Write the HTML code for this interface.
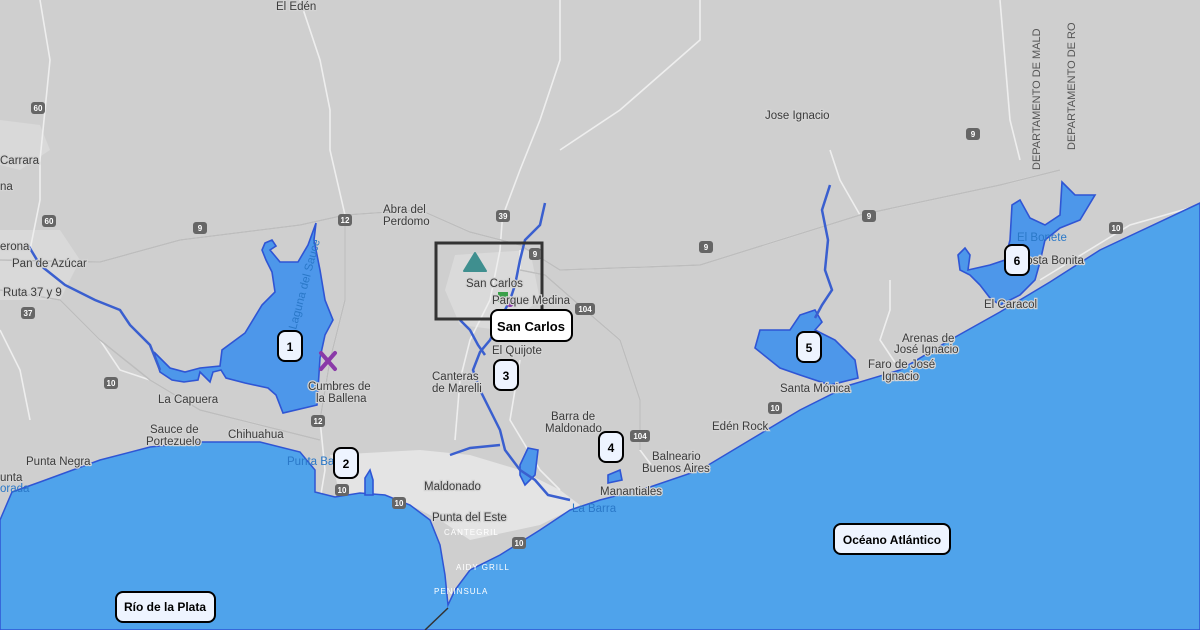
<!DOCTYPE html>
<html><head><meta charset="utf-8"><style>
html,body{margin:0;padding:0;width:1200px;height:630px;overflow:hidden;background:#cfcfcf}
svg{display:block}
text{font-family:"Liberation Sans",sans-serif}
.l{font-size:11.5px;fill:#3c3c3c;stroke:#d4d4d4;stroke-width:2.5px;paint-order:stroke}
.w{font-size:11.5px;fill:#2a78c8}
.s{font-size:8px;fill:#fff;font-weight:bold;text-anchor:middle}
.m{font-size:13px;font-weight:bold;fill:#000;text-anchor:middle}
.b{font-size:12px;font-weight:bold;fill:#000;text-anchor:middle}
</style></head><body>
<svg width="1200" height="630" viewBox="0 0 1200 630" xmlns="http://www.w3.org/2000/svg">
<rect width="1200" height="630" fill="#cfcfcf"/>
<path d="M330 455 L420 450 L470 455 L520 470 L560 490 L580 505 L540 525 L470 540 L440 520 L400 500 L340 495 Z" fill="#e4e4e4"/>
<path d="M455 255 L530 250 L540 300 L500 330 L460 325 L445 290 Z" fill="#dadada"/>
<path d="M0 120 L40 125 L50 150 L20 170 L0 165 Z" fill="#d9d9d9"/>
<path d="M0 230 L60 230 L80 260 L60 300 L0 300 Z" fill="#d9d9d9"/>
<g fill="none" stroke="#eeeeee" stroke-width="1.6">
<path d="M0 260 L100 262 L180 240 L300 225 L345 215 L420 210 L470 232 L520 245 L560 270 L700 265 L860 215 L1000 185 L1060 170"/>
<path d="M345 215 L345 300 L330 360 L320 420 L325 470 L320 500"/>
<path d="M503 210 L500 250 L490 300 L470 340 L460 380 L455 440"/>
<path d="M520 250 L520 270 L545 275 L585 310 L620 340 L640 400 L640 450 L655 470"/>
<path d="M0 290 L60 300 L100 340 L120 370 L150 380 L200 410 L240 420 L280 430 L320 440"/>
<path d="M40 0 L50 60 L45 110 L40 160 L40 200 L30 250"/>
<path d="M300 0 L320 60 L330 110 L330 150 L345 215"/>
<path d="M560 0 L560 60 L540 120 L520 170 L505 210"/>
<path d="M860 215 L840 180 L830 150"/>
<path d="M890 280 L890 310 L880 340 L900 370"/>
<path d="M1200 205 L1130 225 L1040 280"/>
<path d="M700 0 L700 40 L620 110 L560 150"/>
<path d="M1000 0 L1010 120 L1020 160"/>
<path d="M0 330 L20 370 L30 420"/>
<path d="M520 360 L510 420 L540 470 L560 490"/>
</g>
<g fill="none" stroke="#bdbdbd" stroke-width="1.5">
<path d="M0 260 L100 262 L180 240 L300 225 L345 215 L420 210 L470 232 L520 245 L560 270 L700 265 L860 215 L1000 185 L1060 170"/>
<path d="M345 215 L345 300 L330 360 L320 420"/>
<path d="M520 270 L545 275 L585 310 L620 340 L640 400 L640 450"/>
<path d="M0 290 L60 300 L100 340 L150 380 L200 410 L280 430 L320 440"/>
</g>
<path d="M0 630 L0 520 L12 492 L40 482 L100 460 L150 447 L200 442 L260 442 L300 452 L315 470 L315 492 L335 497 L360 493 L385 495 L410 505 L430 520 L440 545 L445 575 L448 605 L455 590 L470 570 L500 555 L540 530 L570 510 L600 500 L650 487 L700 470 L750 440 L800 410 L850 385 L900 370 L950 340 L1000 312 L1050 282 L1100 250 L1200 203 L1200 630 Z" fill="#4fa3eb" stroke="#2f55d4" stroke-width="1.5"/>
<g fill="#4d97ea" stroke="#2f55d4" stroke-width="1.6">
<path d="M265 243 L272 240 L276 246 L270 250 L280 262 L298 262 L308 245 L316 223 L314 240 L320 270 L325 300 L333 320 L325 335 L320 358 L317 405 L283 413 L276 395 L268 388 L245 383 L226 378 L221 370 L213 372 L210 382 L200 372 L198 380 L184 382 L172 380 L160 372 L154 352 L170 368 L185 372 L200 368 L220 366 L222 350 L245 333 L262 305 L275 292 L272 272 L266 260 L262 250 Z"/>
<path d="M760 330 L790 330 L800 315 L815 310 L822 322 L815 330 L835 340 L855 360 L858 378 L830 385 L800 375 L780 368 L755 348 Z"/>
<path d="M958 255 L965 248 L970 255 L968 270 L990 265 L1005 260 L1010 240 L1012 205 L1020 200 L1030 218 L1045 225 L1060 215 L1062 182 L1075 195 L1095 195 L1080 220 L1060 228 L1045 240 L1040 262 L1035 280 L1020 295 L1000 305 L990 298 L980 285 L970 275 L960 270 Z"/>
<path d="M608 475 L620 470 L622 480 L608 483 Z"/>
<path d="M520 465 L528 448 L538 450 L535 475 L525 485 L520 475 Z"/>
<path d="M365 478 L370 470 L373 480 L373 495 L365 495 Z"/>
</g>
<g fill="none" stroke="#3a5fcf" stroke-width="2.5">
<path d="M28 245 L40 265 L65 285 L95 300 L120 310 L130 325 L150 345 L160 370"/>
<path d="M545 203 L540 225 L525 240 L520 260 L515 285 L510 300 L500 320 L490 340 L480 352 L473 370 L480 390 L490 410 L500 430 L505 450 L520 470 L535 480 L548 495 L570 500"/>
<path d="M460 320 L470 330 L478 345 L485 355"/>
<path d="M450 455 L470 448 L500 445"/>
<path d="M830 185 L822 210 L828 240 L825 270 L832 290 L822 305 L815 318"/>
</g>
<rect x="436" y="243" width="106" height="76" fill="none" stroke="#333" stroke-width="3"/>
<path d="M475 253 L486 271 L464 271 Z" fill="#3f8f8f" stroke="#3f8f8f" stroke-width="2" stroke-linejoin="round"/>
<rect x="498" y="292" width="10" height="10" fill="#3aa04a"/>
<circle cx="510" cy="303" r="4" fill="#8a3aa8"/>
<path d="M321 353 L335 369 M335 353 L321 369" stroke="#8a3aa8" stroke-width="4" stroke-linecap="round"/>
<g>
<rect x="31" y="102" width="14" height="12" rx="3" fill="#666"/><text class="s" x="38" y="111">60</text>
<rect x="42" y="215" width="14" height="12" rx="3" fill="#666"/><text class="s" x="49" y="224">60</text>
<rect x="193" y="222" width="14" height="12" rx="3" fill="#666"/><text class="s" x="200" y="231">9</text>
<rect x="338" y="214" width="14" height="12" rx="3" fill="#666"/><text class="s" x="345" y="223">12</text>
<rect x="21" y="307" width="14" height="12" rx="3" fill="#666"/><text class="s" x="28" y="316">37</text>
<rect x="104" y="377" width="14" height="12" rx="3" fill="#666"/><text class="s" x="111" y="386">10</text>
<rect x="311" y="415" width="14" height="12" rx="3" fill="#666"/><text class="s" x="318" y="424">12</text>
<rect x="335" y="484" width="14" height="12" rx="3" fill="#666"/><text class="s" x="342" y="493">10</text>
<rect x="392" y="497" width="14" height="12" rx="3" fill="#666"/><text class="s" x="399" y="506">10</text>
<rect x="512" y="537" width="14" height="12" rx="3" fill="#666"/><text class="s" x="519" y="546">10</text>
<rect x="496" y="210" width="14" height="12" rx="3" fill="#666"/><text class="s" x="503" y="219">39</text>
<rect x="529" y="248" width="12" height="12" rx="3" fill="#666"/><text class="s" x="535" y="257">9</text>
<rect x="575" y="303" width="20" height="12" rx="3" fill="#666"/><text class="s" x="585" y="312">104</text>
<rect x="630" y="430" width="20" height="12" rx="3" fill="#666"/><text class="s" x="640" y="439">104</text>
<rect x="699" y="241" width="14" height="12" rx="3" fill="#666"/><text class="s" x="706" y="250">9</text>
<rect x="862" y="210" width="14" height="12" rx="3" fill="#666"/><text class="s" x="869" y="219">9</text>
<rect x="966" y="128" width="14" height="12" rx="3" fill="#666"/><text class="s" x="973" y="137">9</text>
<rect x="768" y="402" width="14" height="12" rx="3" fill="#666"/><text class="s" x="775" y="411">10</text>
<rect x="1109" y="222" width="14" height="12" rx="3" fill="#666"/><text class="s" x="1116" y="231">10</text>
</g>
<text class="l" x="276" y="10">El Edén</text>
<text class="l" x="0" y="164">Carrara</text>
<text class="l" x="0" y="190">na</text>
<text class="l" x="0" y="250">erona</text>
<text class="l" x="12" y="267">Pan de Azúcar</text>
<text class="l" x="3" y="296">Ruta 37 y 9</text>
<text class="l" x="383" y="213">Abra del</text>
<text class="l" x="383" y="225">Perdomo</text>
<text class="l" x="765" y="119">Jose Ignacio</text>
<text class="l" x="466" y="287">San Carlos</text>
<text class="l" x="492" y="304">Parque Medina</text>
<text class="l" x="492" y="354">El Quijote</text>
<text class="l" x="432" y="380">Canteras</text>
<text class="l" x="432" y="392">de Marelli</text>
<text class="l" x="158" y="403">La Capuera</text>
<text class="l" x="308" y="390">Cumbres de</text>
<text class="l" x="316" y="402">la Ballena</text>
<text class="l" x="150" y="433">Sauce de</text>
<text class="l" x="146" y="445">Portezuelo</text>
<text class="l" x="228" y="438">Chihuahua</text>
<text class="l" x="26" y="465">Punta Negra</text>
<text class="l" x="0" y="481">unta</text>
<text class="w" x="0" y="492">orada</text>
<text class="w" x="287" y="465">Punta Ba</text>
<text class="l" x="424" y="490">Maldonado</text>
<text class="l" x="551" y="420">Barra de</text>
<text class="l" x="545" y="432">Maldonado</text>
<text class="l" x="652" y="460">Balneario</text>
<text class="l" x="642" y="472">Buenos Aires</text>
<text class="l" x="600" y="495">Manantiales</text>
<text class="w" x="572" y="512">La Barra</text>
<text class="l" x="432" y="521">Punta del Este</text>
<text class="l" x="712" y="430">Edén Rock</text>
<text class="l" x="780" y="392">Santa Mónica</text>
<text class="l" x="868" y="368">Faro de José</text>
<text class="l" x="882" y="380">Ignacio</text>
<text class="l" x="902" y="342">Arenas de</text>
<text class="l" x="894" y="353">José Ignacio</text>
<text class="l" x="984" y="308">El Caracol</text>
<text class="l" x="1018" y="264">Costa Bonita</text>
<text class="w" x="1017" y="241">El Bonete</text>
<text class="w" x="296" y="330" transform="rotate(-75 296 330)" font-size="11">Laguna del Sauce</text>
<text x="1040" y="170" font-size="11" fill="#555" transform="rotate(-90 1040 170)">DEPARTAMENTO DE MALD</text>
<text x="1075" y="150" font-size="11" fill="#555" transform="rotate(-90 1075 150)">DEPARTAMENTO DE RO</text>
<text x="444" y="535" font-size="8" fill="#fff" letter-spacing="1">CANTEGRIL</text>
<text x="456" y="570" font-size="8" fill="#fff" letter-spacing="1">AIDY GRILL</text>
<text x="434" y="594" font-size="8" fill="#fff" letter-spacing="1">PENINSULA</text>
<path d="M448 608 L425 630" stroke="#333" stroke-width="1.5"/>
<g fill="#eef4ff" stroke="#000" stroke-width="2">
<rect x="278" y="331" width="24" height="30" rx="7"/>
<rect x="334" y="448" width="24" height="30" rx="7"/>
<rect x="494" y="360" width="24" height="30" rx="7"/>
<rect x="599" y="432" width="24" height="30" rx="7"/>
<rect x="797" y="332" width="24" height="30" rx="7"/>
<rect x="1005" y="245" width="24" height="30" rx="7"/>
<rect x="491" y="310" width="81" height="31" rx="7" fill="#fff"/>
<rect x="834" y="524" width="116" height="30" rx="7"/>
<rect x="116" y="592" width="99" height="30" rx="7"/>
</g>
<text class="b" x="290" y="351">1</text>
<text class="b" x="346" y="468">2</text>
<text class="b" x="506" y="380">3</text>
<text class="b" x="611" y="452">4</text>
<text class="b" x="809" y="352">5</text>
<text class="b" x="1017" y="265">6</text>
<text class="m" x="531" y="331">San Carlos</text>
<text class="b" x="892" y="544">Océano Atlántico</text>
<text class="b" x="165" y="611">Río de la Plata</text>
</svg>
</body></html>
